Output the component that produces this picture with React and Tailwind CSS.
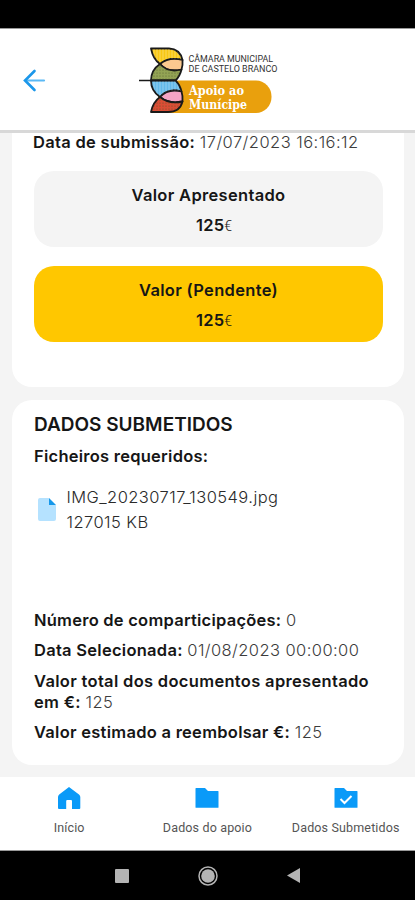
const INTER = "font-['Inter','Liberation_Sans',sans-serif]";

function Field({ label, value, labelClass = "tracking-[0.27px]", valueClass = "tracking-[0.42px]" }) {
  return (
    <p className="mb-[9.5px] whitespace-nowrap text-[16.5px] leading-[21px] text-[#161616]">
      <span className={`font-semibold ${labelClass}`}>{label}</span>{" "}
      <span className={`font-light text-[#3c3c3c] ${valueClass}`}>{value}</span>
    </p>
  );
}

function AmountCard({ title, className }) {
  return (
    <div className={`h-[76px] w-[349px] rounded-[20px] pt-[14px] text-center text-[16.5px] leading-[21px] text-[#161616] ${className}`}>
      <p className="font-semibold tracking-[0.32px]">{title}</p>
      <p className="mt-[9px] pl-[11px]">
        <span className="font-semibold tracking-[0.2px]">125</span>
        <span className="font-['Roboto',sans-serif] text-[14px] font-light">€</span>
      </p>
    </div>
  );
}

function Logo() {
  return (
    <svg width="142" height="70" viewBox="138 45 142 70" className="block">
      <defs>
        <pattern id="dots" width="3" height="3" patternUnits="userSpaceOnUse">
          <circle cx="1" cy="1" r="0.5" fill="#4c5528" />
        </pattern>
        <pattern id="lines" width="3" height="3" patternUnits="userSpaceOnUse">
          <path d="M1 0V3" stroke="#fff" strokeWidth="0.7" opacity="0.45" />
        </pattern>
      </defs>
      <path d="M158 80.500H256a15.500 16.200 0 0 1 0 32.500H158Z" fill="#e9a00d" />
      <g stroke="#191919" strokeWidth="1.8" strokeLinejoin="round">
        <path d="M151 48.500H169Q180 49 182.500 60Q169 56.500 160 64Q153 59 151 48.500Z" fill="#f8c713" />
        <path d="M160 64Q168 73 181.500 69.500Q183 65 182.500 60Q169 56.500 160 64Z" fill="#fbc98f" />
        <path d="M160 64Q168 73 181.500 69.500Q180 76 175.500 80.500H151Q151 70 160 64Z" fill="#93a354" />
        <path d="M151 80.500H175.500Q180 85 181.500 91.500Q168 88 160 97Q151 91 151 80.500Z" fill="#62b9e9" />
        <path d="M160 97Q168 88 181.500 91.500Q183 96 182.500 101.500Q169 104.500 160 97Z" fill="#f5a4c4" />
        <path d="M160 97Q169 104.500 182.500 101.500Q180 112 168 112H151Q153 102 160 97Z" fill="#da4d35" />
      </g>
      <path d="M160 64Q168 73 181 69.500Q180 76 175.500 80.500H151Q151 70 160 64Z" fill="url(#dots)" />
      <path d="M152 80.500H175Q179 85 181 91Q168 88 160 96Q152 91 152 80.500ZM152 49H169Q180 49 181.500 59.500Q169 56.500 160 63Q153 59 152 49Z" fill="url(#lines)" />
      <path d="M160 98Q169 104.500 181.500 102Q180 111 168 111H152Q153 102 160 98Z" fill="url(#dots)" />
      <path d="M139 80.500H176" stroke="#191919" strokeWidth="1.700" />
      <g fill="#333" fontFamily="Roboto, sans-serif" fontSize="9">
        <text x="188.500" y="62.300" textLength="84.500" lengthAdjust="spacingAndGlyphs">CÂMARA MUNICIPAL</text>
        <text x="188.500" y="71.800" textLength="89" lengthAdjust="spacingAndGlyphs">DE CASTELO BRANCO</text>
      </g>
      <g fill="#fff" fontFamily="'DejaVu Serif', serif" fontSize="12.500" fontWeight="700">
        <text x="189" y="94.500" textLength="55" lengthAdjust="spacingAndGlyphs">Apoio ao</text>
        <text x="189" y="108.500" textLength="58" lengthAdjust="spacingAndGlyphs">Munícipe</text>
      </g>
    </svg>
  );
}

function FileIcon() {
  return (
    <svg width="18" height="23" viewBox="0 0 18 23" className="mb-[2px] block">
      <path d="M2 0H11V7H18V21a2 2 0 0 1-2 2H2a2 2 0 0 1-2-2V2a2 2 0 0 1 2-2Z" fill="#b5e2ff" />
      <path d="M11 0L18 7H11Z" fill="#1597ea" />
    </svg>
  );
}

const HomeIcon = () => (
  <svg width="24" height="24" viewBox="0 0 24 24" className="block">
    <path d="M12 1L22 8.500Q23.300 9.500 23.300 11V22a1 1 0 0 1-1 1H15V15a1 1 0 0 0-1-1H10.200a1 1 0 0 0-1 1V23H2a1 1 0 0 1-1-1V11Q1 9.500 2.200 8.500Z" fill="#0a9af8" />
  </svg>
);

const FolderIcon = ({ checked }) => (
  <svg width="24" height="24" viewBox="0 0 24 24" className="block">
    <path d="M1 2H10L13 5H23a.5 .5 0 0 1 .5 .5V21.200a.5 .5 0 0 1-.5 .5H1a.5 .5 0 0 1-.5-.5V2.500a.5 .5 0 0 1 .5-.5Z" fill="#0a9af8" />
    {checked && <path d="M6.500 13L10.500 17L17.500 10" fill="none" stroke="#fff" strokeWidth="2" />}
  </svg>
);

function NavItem({ icon, label }) {
  return (
    <div className="flex w-[138.3px] flex-col items-center pt-[9px]">
      {icon}
      <span className="mt-[10px] whitespace-nowrap font-['Roboto',sans-serif] text-[12.5px] leading-[16px] tracking-[0.15px] text-[#555]">{label}</span>
    </div>
  );
}

export default function App() {
  return (
    <div className={`flex h-[900px] w-[415px] flex-col overflow-hidden bg-[#f4f4f4] ${INTER}`}>
      <div className="h-[29px] shrink-0 border-b border-[#999] bg-black" />
      <header className="flex h-[104px] shrink-0 items-start border-b-[3px] border-[#d8d8d8] bg-white pt-4">
        <svg width="24" height="24" viewBox="0 0 24 24" className="ml-[22px] mt-[24px] block" fill="none" strokeLinecap="round">
          <path d="M4 11.500H22" stroke="#5bb9f5" strokeWidth="2.200" />
          <path d="M12.500 2L3 11.500L12.500 21" stroke="#1b97ea" strokeWidth="2.600" />
        </svg>
        <div className="ml-[92px]"><Logo /></div>
      </header>
      <main className="flex h-[644px] shrink-0 flex-col">
        <section className="ml-3 h-[254px] w-[392px] rounded-b-[20px] bg-white pl-[22px]">
          <div className="-ml-px -mt-[1.5px] h-[39.5px]">
            <Field label="Data de submissão:" value="17/07/2023 16:16:12" labelClass="tracking-[0.3px]" valueClass="tracking-[0.46px]" />
          </div>
          <AmountCard title="Valor Apresentado" className="bg-[#f4f4f4]" />
          <AmountCard title="Valor (Pendente)" className="mt-[19px] bg-[#ffc700]" />
        </section>
        <section className="ml-3 mt-[13px] h-[365px] w-[392px] rounded-[20px] bg-white pl-[22px] pt-[13px]">
          <h1 className="text-[19px] font-semibold leading-[24px] text-[#161616]">DADOS SUBMETIDOS</h1>
          <h2 className="mt-[9px] text-[16.5px] font-semibold leading-[21px] tracking-[0.25px] text-[#161616]">Ficheiros requeridos:</h2>
          <div className="mt-[18px] flex h-[50px] items-center gap-[11px] pl-[3.5px]">
            <FileIcon />
            <div className="text-[16.5px] font-light leading-[25px] tracking-[0.44px] text-[#2a2a2a]">
              <p>IMG_20230717_130549.jpg</p>
              <p>127015 KB</p>
            </div>
          </div>
          <div className="mt-[74.500px]">
            <Field label="Número de comparticipações:" value="0" labelClass="tracking-[0.24px]" />
            <Field label="Data Selecionada:" value="01/08/2023 00:00:00" />
            <Field label={<>Valor total dos documentos apresentado<br />em €:</>} value="125" labelClass="tracking-[0.32px]" />
            <Field label="Valor estimado a reembolsar €:" value="125" />
          </div>
        </section>
      </main>
      <nav className="flex h-[73px] shrink-0 bg-white">
        <NavItem icon={<HomeIcon />} label="Início" />
        <NavItem icon={<FolderIcon />} label="Dados do apoio" />
        <NavItem icon={<FolderIcon checked />} label="Dados Submetidos" />
      </nav>
      <footer className="flex h-[50px] shrink-0 items-center border-t border-[#999] bg-black">
        <svg width="14" height="14" className="ml-[115px] block"><rect width="14" height="14" rx="1" fill="#b4b4b4" /></svg>
        <svg width="22" height="22" viewBox="0 0 22 22" className="ml-[67.5px] block">
          <circle cx="11" cy="11" r="9" fill="none" stroke="#b4b4b4" strokeWidth="1.500" />
          <circle cx="11" cy="11" r="6.800" fill="#b4b4b4" />
        </svg>
        <svg width="13" height="15" viewBox="0 0 13 15" className="ml-[68px] block"><path d="M13 0V15L0 7.500Z" fill="#b4b4b4" /></svg>
      </footer>
    </div>
  );
}
